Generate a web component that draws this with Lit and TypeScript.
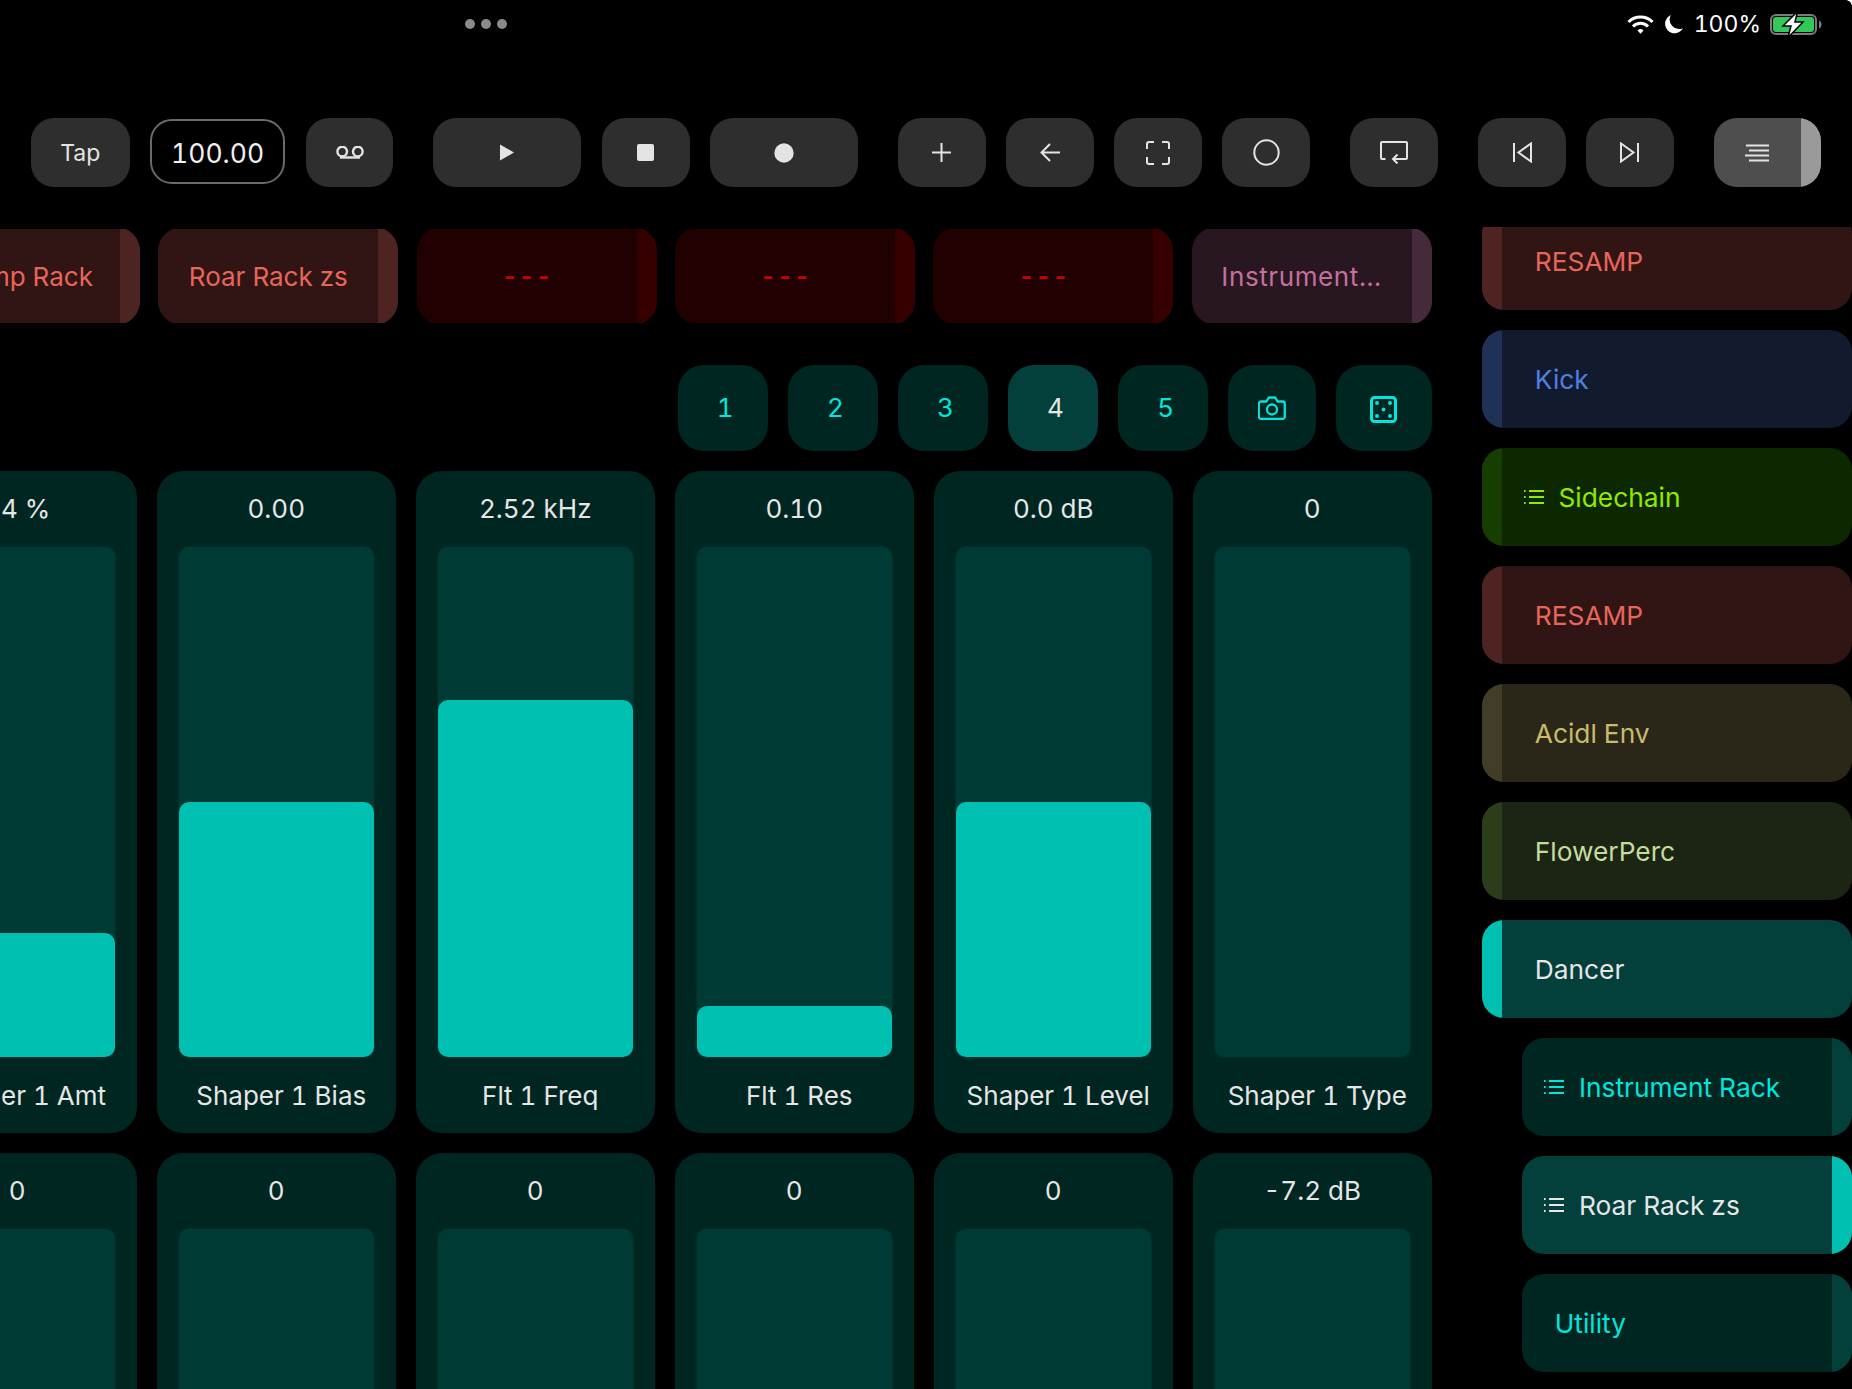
import { LitElement, html, css, svg } from "lit";
import { customElement } from "lit/decorators.js";

const ic = (w: number, h: number, body: unknown, sw = 2) =>
  html`<svg class="ic" width=${w} height=${h} viewBox="0 0 ${w} ${h}" fill="none" stroke="currentColor" stroke-width=${sw}>${body}</svg>`;

const listIcon = () => html`<svg class="list" width="20" height="14" viewBox="0 0 20 14" fill="none" stroke="currentColor" stroke-width="1.800">
  <path d="M0 1h1.600M0 7h1.600M0 13h1.600M5 1h15M5 7h15M5 13h15"/></svg>`;

const ICONS = {
  vm: () => ic(28, 13, svg`<circle cx="6.200" cy="5.600" r="4.800"/><circle cx="21.800" cy="5.600" r="4.800"/><path d="M4 11.500h20"/>`, 2.400),
  play: () => html`<svg width="14" height="17" viewBox="0 0 14 17"><path d="M0 0.600 14 8.500 0 16.400z" fill="#e4e4e4"/></svg>`,
  stop: () => html`<svg width="17" height="17" viewBox="0 0 17 17"><rect width="17" height="17" rx="2" fill="#e4e4e4"/></svg>`,
  rec: () => html`<svg width="20" height="20" viewBox="0 0 20 20"><circle cx="10" cy="10" r="9.700" fill="#e4e4e4"/></svg>`,
  plus: () => ic(19, 19, svg`<path d="M0 9.500h19M9.500 0v19"/>`),
  back: () => ic(20, 19, svg`<path d="M20 9.500H1.500M10 1 1.500 9.500 10 18"/>`),
  full: () => ic(24, 24, svg`<path d="M8 1H3a2 2 0 0 0-2 2v5M16 1h5a2 2 0 0 1 2 2v5M8 23H3a2 2 0 0 1-2-2v-5M16 23h5a2 2 0 0 0 2-2v-5"/>`),
  circle: () => ic(27, 27, svg`<circle cx="13.500" cy="13.500" r="12.200"/>`),
  loop: () => ic(28, 23, svg`<path d="M5.500 18H2a1 1 0 0 1-1-1V2a1 1 0 0 1 1-1h24a1 1 0 0 1 1 1v15a1 1 0 0 1-1 1H13M17.500 13.500 13 18l4.500 4.500"/>`),
  prev: () => ic(20, 21, svg`<path d="M2 1v19M19 1.500v18L6.500 10.500z"/>`),
  next: () => ic(20, 21, svg`<path d="M18 1v19M1 1.500v18l12.500-9z"/>`),
  menu: () => ic(24, 18, svg`<path d="M1 1.500h23M4 6.500h20M0 11.500h24M4 16.500h20"/>`),
  cam: () => html`<svg width="28" height="24" viewBox="0 0 28 24" fill="none" stroke="#00e5dc" stroke-width="2.300" stroke-linejoin="round"><path d="M3.500 5.500h5l2-3.500a1.500 1.500 0 0 1 1-.5h5a1.500 1.500 0 0 1 1 .5l2 3.500h5a2.500 2.500 0 0 1 2.300 2.500v12.500a2.500 2.500 0 0 1-2.500 2.500h-21a2.500 2.500 0 0 1-2.500-2.500V8a2.500 2.500 0 0 1 2.500-2.500z"/><circle cx="14" cy="13.500" r="5"/></svg>`,
  dice: () => html`<svg class="dicei" width="27" height="27" viewBox="0 0 27 27"><rect x="1.500" y="1.500" width="24" height="24" rx="3" fill="none" stroke="#00e5dc" stroke-width="3"/><g fill="#00e5dc"><circle cx="7" cy="7" r="2"/><circle cx="20" cy="7" r="2"/><circle cx="13.500" cy="13.500" r="2"/><circle cx="7" cy="20" r="2"/><circle cx="20" cy="20" r="2"/></g></svg>`,
};

type Tb = { cls: string; node: unknown };
const TOOLBAR: Tb[][] = [
  [{ cls: "tap", node: "Tap" }, { cls: "tempo", node: "100.00" }, { cls: "", node: ICONS.vm() }],
  [{ cls: "wide", node: ICONS.play() }, { cls: "", node: ICONS.stop() }, { cls: "wide", node: ICONS.rec() }],
  [{ cls: "", node: ICONS.plus() }, { cls: "", node: ICONS.back() }, { cls: "", node: ICONS.full() }, { cls: "", node: ICONS.circle() }],
  [{ cls: "", node: ICONS.loop() }],
  [{ cls: "", node: ICONS.prev() }, { cls: "", node: ICONS.next() }],
];

const TOP = [
  { t: "Resamp Rack", c: "red" },
  { t: "Roar Rack zs", c: "red" },
  { t: "- - -", c: "off" },
  { t: "- - -", c: "off" },
  { t: "- - -", c: "off" },
  { t: "Instrument...", c: "plum" },
];

const ROW1 = [
  { v: "24 %", l: "Shaper 1 Amt", p: 24.4 },
  { v: "0.00", l: "Shaper 1 Bias", p: 50 },
  { v: "2.52 kHz", l: "Flt 1 Freq", p: 70 },
  { v: "0.10", l: "Flt 1 Res", p: 10 },
  { v: "0.0 dB", l: "Shaper 1 Level", p: 50 },
  { v: "0", l: "Shaper 1 Type", p: 0 },
];
const ROW2 = ["0", "0", "0", "0", "0", "-7.2 dB"].map((v) => ({ v, l: "", p: 0 }));

const LIST = [
  { t: "RESAMP", c: "red" },
  { t: "Kick", c: "blue" },
  { t: "Sidechain", c: "green", icon: true },
  { t: "RESAMP", c: "red" },
  { t: "Acidl Env", c: "olive" },
  { t: "FlowerPerc", c: "moss" },
  { t: "Dancer", c: "sel" },
  { t: "Instrument Rack", c: "teal child", icon: true },
  { t: "Roar Rack zs", c: "selchild child", icon: true },
  { t: "Utility", c: "teal child" },
];

@customElement("app-root")
export class AppRoot extends LitElement {
  static styles = css`
    :host {
      display: block;
      position: relative;
      width: 1852px;
      height: 1389px;
      overflow: hidden;
      background: #000;
      color: #e6e6e6;
      font-family: Inter, "Noto Sans", sans-serif;
      font-size: 26px;
      font-feature-settings: "tnum";
    }
    .corner {
      position: absolute;
      top: 0;
      right: 0;
      width: 6px;
      height: 6px;
      background: radial-gradient(circle at 0 100%, transparent 5.500px, #fff 6px);
    }
    .status {
      display: flex;
      align-items: center;
      height: 48px;
      padding: 0 30px 0 465px;
      box-sizing: border-box;
    }
    .dots { display: flex; gap: 6px; }
    .dots i { width: 10px; height: 10px; border-radius: 50%; background: #8a8a8a; }
    .sys { margin-left: auto; display: flex; align-items: center; font-size: 23px; color: #fff; }
    .sys .wifi { margin-right: 10px; }
    .sys .moon { margin-right: 10.500px; }
    .sys .bat { margin-left: 9px; }

    .toolbar { display: flex; gap: 40.100px; height: 69px; margin-top: 70px; padding-left: 31px; }
    .group { display: flex; gap: 20.400px; }
    .btn {
      width: 87.700px;
      height: 69px;
      box-sizing: border-box;
      border-radius: 23px;
      background: #2e2e2e;
      color: #e4e4e4;
      display: flex;
      align-items: center;
      justify-content: center;
    }
    .btn.wide { width: 148px; }
    .btn.tap { width: 98.500px; font-size: 23px; }
    .btn.tempo {
      width: 135.400px;
      height: 65px;
      margin-top: 1px;
      padding-top: 2px;
      background: #000;
      border: 2px solid #6a6a6a;
      border-radius: 22px;
      font-size: 26.500px;
      color: #f0f0f0;
    }
    .btn.menu { width: 107px; background: #4e4e4e; overflow: hidden; justify-content: flex-start; }
    .btn.menu .mid { flex: 1; display: flex; justify-content: center; }
    .btn.menu .band { width: 20px; height: 100%; background: #9a9a9a; }

    .main { display: flex; height: 1162px; margin-top: 40px; }
    .left { width: 1431.500px; flex: none; overflow: hidden; display: flex; flex-direction: column; align-items: flex-end; padding-top: 2px; box-sizing: border-box; }
    .row { display: flex; gap: 20.500px; justify-content: flex-end; flex: none; }
    .row.slots { gap: 18.300px; }

    .slot { width: 240px; height: 94px; overflow: hidden; flex: none; }
    .slot .in {
      height: 98px;
      margin-top: -2px;
      border-radius: 24px;
      overflow: hidden;
      display: flex;
      align-items: stretch;
    }
    .slot .name { flex: 1; display: flex; align-items: center; justify-content: center; white-space: nowrap; }
    .slot .band { width: 20px; flex: none; }
    .slot.red .in { background: #301514; color: #e8655a; }
    .slot.red .band { background: #4e2422; }
    .slot.off .in { background: #200000; color: #cc0000; font-weight: 700; }
    .slot.off .name { word-spacing: -5px; font-size: 24px; }
    .slot.off .band { background: #370000; }
    .slot.plum .in { background: #281720; color: #c4709f; }
    .slot.plum .name { letter-spacing: 0.600px; }
    .slot.plum .band { background: #452a3c; }

    .pager { margin-top: 42px; gap: 20.300px; }
    .pg {
      width: 89.800px;
      height: 85.700px;
      border-radius: 26px;
      background: #002622;
      color: #00e5dc;
      display: flex;
      align-items: center;
      justify-content: center;
      flex: none;
    }
    .pg.num { padding-left: 5px; box-sizing: border-box; }
    .pg.on { background: #033f3b; color: #e6e6e6; }
    .pg.cam { width: 88px; margin-right: -0.300px; }
    .pg.dice { width: 95.500px; margin-left: -0.300px; }
    .dicei { margin-top: 3px; }

    .cards1 { margin-top: 20.300px; }
    .cards2 { margin-top: 20px; }
    .card {
      width: 238.500px;
      height: 662px;
      flex: none;
      border-radius: 26px;
      background: #002622;
      padding: 0 21px;
      box-sizing: border-box;
      display: flex;
      flex-direction: column;
      align-items: stretch;
    }
    .val { height: 75px; flex: none; display: flex; align-items: center; justify-content: center; white-space: nowrap; }
    .track {
      height: 512px;
      flex: none;
      box-sizing: border-box;
      border: 1.500px solid #012f2b;
      border-radius: 11px;
      background: #003a35;
      display: flex;
      align-items: flex-end;
    }
    .fill { width: 100%; background: #00c1b1; border-radius: 10px; }
    .lab { height: 75px; flex: none; display: flex; align-items: center; justify-content: center; padding: 1px 0 0 10px; box-sizing: border-box; white-space: nowrap; }

    .side { flex: 1; margin-left: 50.500px; overflow: hidden; display: flex; flex-direction: column; gap: 20px; font-size: 26.300px; }
    .side .item:first-child { margin-top: -15px; }
    .item {
      height: 98px;
      flex: none;
      border-radius: 22px;
      overflow: hidden;
      display: flex;
      align-items: stretch;
    }
    .item .band { width: 20px; flex: none; }
    .item .txt { flex: 1; display: flex; align-items: center; gap: 14.500px; padding-left: 32.800px; }
    .item .txt.hasicon { padding-left: 22px; }
    .item.child { margin-left: 40px; flex-direction: row-reverse; }
    .item.child .txt.hasicon { gap: 15px; }
    .item.red { background: #301514; color: #e8655a; }
    .item.red .band { background: #4e2422; }
    .item.blue { background: #121b2d; color: #4f80e0; }
    .item.blue .band { background: #1f3157; }
    .item.green { background: #0d2800; color: #93e800; }
    .item.green .band { background: #163e00; }
    .item.olive { background: #2a2718; color: #c8bc6c; }
    .item.olive .band { background: #423d27; }
    .item.moss { background: #1c2413; color: #c4dc9c; }
    .item.moss .band { background: #2c3d1b; }
    .item.sel { background: #033f3b; color: #e6e6e6; }
    .item.sel .band { background: #00c1b1; }
    .item.teal { background: #002622; color: #00e5dc; }
    .item.teal .band { background: #033f3b; }
    .item.selchild { background: #033f3b; color: #e6e6e6; }
    .item.selchild .band { background: #00c1b1; }
  `;

  private card(c: { v: string; l: string; p: number }) {
    return html`<div class="card">
      <div class="val">${c.v}</div>
      <div class="track">${c.p ? html`<div class="fill" style="height:${c.p}%"></div>` : ""}</div>
      <div class="lab">${c.l}</div>
    </div>`;
  }

  render() {
    return html`
      <div class="status">
        <div class="dots"><i></i><i></i><i></i></div>
        <div class="sys">
          <svg class="wifi" width="27" height="19" viewBox="0 0 27 19" fill="none" stroke="#fff" stroke-width="3">
            <path d="M1.500 7a17 17 0 0 1 24 0M6 11.500a10.500 10.500 0 0 1 15 0"/>
            <path d="M10.500 15.500a4.300 4.300 0 0 1 6 0L13.500 18.800z" fill="#fff" stroke="none"/>
          </svg>
          <svg class="moon" width="19" height="19" viewBox="0 0 18 18"><path d="M6.500 0A9 9 0 1 0 18 12.500 9 9 0 0 1 6.500 0z" fill="#fff"/></svg>
          <span>100%</span>
          <svg class="bat" width="52" height="27" viewBox="0 0 52 27">
            <rect x="1" y="4" width="45" height="19" rx="5" fill="none" stroke="#7c7c7c" stroke-width="2"/>
            <rect x="3" y="6" width="41" height="15" rx="3" fill="#34c759"/>
            <path d="M49 9.500c1.500.5 2.500 2 2.500 4s-1 3.500-2.500 4z" fill="#7c7c7c"/>
            <path d="M27.500 .5 13 15h8l-3 11.500L33 11h-8z" fill="#fff" stroke="#000" stroke-width="1.500"/>
          </svg>
        </div>
      </div>

      <div class="toolbar">
        ${TOOLBAR.map(
          (g) => html`<div class="group">${g.map((b) => html`<div class="btn ${b.cls}">${b.node}</div>`)}</div>`,
        )}
        <div class="btn menu"><div class="mid">${ICONS.menu()}</div><div class="band"></div></div>
      </div>

      <div class="main">
        <div class="left">
          <div class="row slots">
            ${TOP.map(
              (s) => html`<div class="slot ${s.c}"><div class="in"><div class="name">${s.t}</div><div class="band"></div></div></div>`,
            )}
          </div>
          <div class="row pager">
            ${["1", "2", "3", "4", "5"].map((n) => html`<div class="pg num ${n === "4" ? "on" : ""}">${n}</div>`)}
            <div class="pg cam">${ICONS.cam()}</div>
            <div class="pg dice">${ICONS.dice()}</div>
          </div>
          <div class="row cards1">${ROW1.map((c) => this.card(c))}</div>
          <div class="row cards2">${ROW2.map((c) => this.card(c))}</div>
        </div>
        <div class="side">
          ${LIST.map(
            (i) => html`<div class="item ${i.c}">
              <div class="band"></div>
              <div class="txt ${i.icon ? "hasicon" : ""}">${i.icon ? listIcon() : ""}<span>${i.t}</span></div>
            </div>`,
          )}
        </div>
      </div>
      <div class="corner"></div>
    `;
  }
}
